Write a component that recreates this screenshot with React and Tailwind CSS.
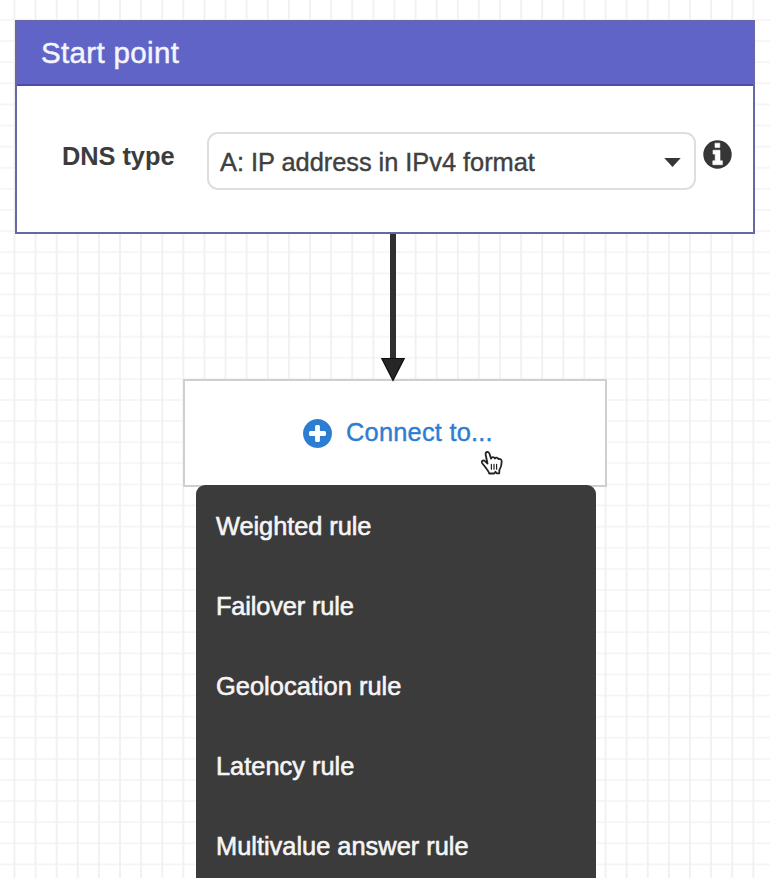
import React from "react";

const RULES = [
  { label: "Weighted rule", tracking: "tracking-[-0.06px]" },
  { label: "Failover rule", tracking: "tracking-[-0.15px]" },
  { label: "Geolocation rule", tracking: "tracking-[0.03px]" },
  { label: "Latency rule", tracking: "tracking-normal" },
  { label: "Multivalue answer rule", tracking: "tracking-normal" },
];

function InfoIcon() {
  return (
    <svg className="size-[29px] shrink-0" viewBox="0 0 29 29" aria-hidden="true">
      <circle cx="14.500" cy="14.500" r="14.200" fill="#363636" />
      <path
        d="M12 3.200h4.800v4.200H12zM10 10.200h7v10.600h2.400v3.900H9.800v-3.900h2.400v-6.700H10z"
        fill="white"
        stroke="white"
        strokeWidth="0.600"
        strokeLinejoin="round"
      />
    </svg>
  );
}

function PlusIcon() {
  return (
    <svg className="size-[29px] shrink-0" viewBox="0 0 1536 1536" fill="#2d7dd2" aria-hidden="true">
      <path d="M1216 832V704q0-26-19-45t-45-19H896V384q0-26-19-45t-45-19H704q-26 0-45 19t-19 45v256H384q-26 0-45 19t-19 45v128q0 26 19 45t45 19h256v256q0 26 19 45t45 19h128q26 0 45-19t19-45V896h256q26 0 45-19t19-45zm320-64q0 209-103 385.500T1153.500 1433 768 1536t-385.500-103T103 1153.500 0 768t103-385.500T382.500 103 768 0t385.500 103T1433 382.500 1536 768z" />
    </svg>
  );
}

function HandCursor() {
  return (
    <svg
      className="absolute left-[295px] top-[69px] h-[27px] w-[26px]"
      viewBox="0 0 26 27"
      fill="white"
      stroke="#222222"
      strokeWidth="1.8"
      strokeLinejoin="round"
      strokeLinecap="round"
      aria-hidden="true"
    >
      <path d="M7.500 13.500 L5.700 5 C5.100 1.400 8.500 0.700 9.500 3.700 L11.100 8.600 C11.600 6.700 14.200 6.800 14.900 8.500 C15.700 7.100 18 7.400 18.500 9.200 C19.900 8.400 21.700 9.300 21.700 11.300 C21.700 15 21.200 17.500 19.400 20 L19.200 23.300 L16.600 23.300 L15.500 21.800 L14.200 23.500 L9.200 23.500 C8.600 21 6.600 19 5.200 17 L2.200 13.200 C0.900 11.200 3 9.500 4.900 11.200 L7.500 13.500" />
      <path d="M11.400 14.400v4.800M14 14.400v4.800M16.600 14.400v4.800" strokeWidth="1.200" />
    </svg>
  );
}

function StartPoint() {
  return (
    <section className="ml-[15px] h-[214px] w-[740px] border-2 border-[#6767a6] bg-white">
      <h1 className="flex h-[64px] items-center border-b-2 border-[#4d4da3] bg-[#5f64c6] pl-6 text-[29.5px] tracking-[0.35px] text-[#f4f4ff] [-webkit-text-stroke:0.5px_#f4f4ff]">
        Start point
      </h1>
      <div className="flex pl-[45px] pt-[46px]">
        <span className="w-[145px] pt-[6px] text-[25.4px] leading-[36px] font-bold tracking-[-0.05px] text-[#3c3c3c]">
          DNS type
        </span>
        <div className="flex h-[58px] w-[489px] items-center justify-between rounded-[11px] border-2 border-[#dedede] pl-[11px] pr-[13px] pt-[3px]">
          <span className="text-[25.4px] tracking-[-0.03px] text-[#404040] [-webkit-text-stroke:0.4px_#404040]">
            A: IP address in IPv4 format
          </span>
          <svg className="h-[9px] w-[17px]" viewBox="0 0 17 9" fill="#363636" aria-hidden="true">
            <path d="M0.300 0H16.700L8.500 9Z" />
          </svg>
        </div>
        <div className="pl-[7px] pt-2">
          <InfoIcon />
        </div>
      </div>
    </section>
  );
}

export default function App() {
  return (
    <main className="relative h-[878px] w-[770px] overflow-hidden bg-white pt-5 font-['Liberation_Sans',Arial,sans-serif]">
      <svg className="absolute inset-0 size-full" aria-hidden="true">
        <defs>
          <pattern id="grid" x="13.500" y="19" width="21.110" height="21.110" patternUnits="userSpaceOnUse">
            <path d="M0 1H21.110" stroke="#f5f5f5" strokeWidth="1.800" />
            <path d="M1 0V21.110" stroke="#f1f1f1" strokeWidth="1.900" />
          </pattern>
        </defs>
        <rect width="100%" height="100%" fill="url(#grid)" />
      </svg>
      <div className="relative flex flex-col items-start">
        <StartPoint />
        <svg className="relative z-10 -mb-[3px] ml-[380px] h-[148px] w-[26px]" viewBox="0 0 26 148" aria-hidden="true">
          <path d="M13 0V126" stroke="#303030" strokeWidth="6" />
          <path d="M1.800 124.500H24.200L13 146.500Z" fill="#262626" stroke="#0c0c0c" strokeWidth="1.200" />
        </svg>
        <div className="relative ml-[183px] flex h-[108px] w-[424px] items-center border-2 border-[#cfcfcf] bg-white pl-[118px]">
          <PlusIcon />
          <span className="pb-[2px] pl-[14px] text-[25.400px] tracking-[0.22px] text-[#2d7dd2] [-webkit-text-stroke:0.4px_#2d7dd2]">
            Connect to...
          </span>
          <HandCursor />
        </div>
        <ul className="relative -mt-[2px] ml-[196px] h-[400px] w-[400px] rounded-t-[9px] bg-[#3b3b3b] pt-px">
          {RULES.map((rule) => (
            <li
              key={rule.label}
              className={`flex h-20 items-center pl-5 text-[25.4px] text-[#f5f5f5] [-webkit-text-stroke:0.6px_#f5f5f5] ${rule.tracking}`}
            >
              {rule.label}
            </li>
          ))}
        </ul>
      </div>
    </main>
  );
}
